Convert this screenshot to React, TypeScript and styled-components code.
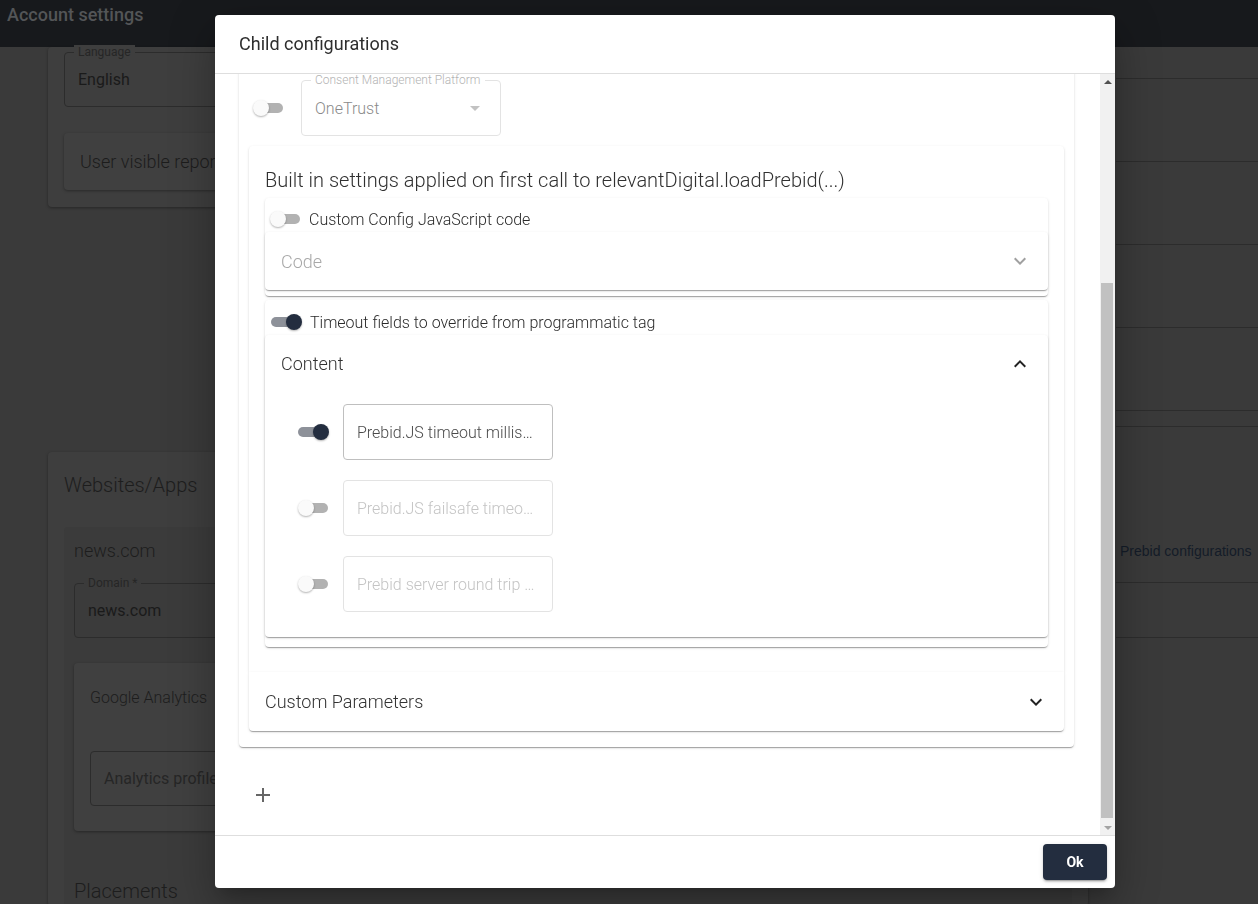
import { useLayoutEffect, useRef, useState } from 'react'
import styled, { createGlobalStyle } from 'styled-components'

const GlobalStyle = createGlobalStyle`
  html, body {
    margin: 0;
    padding: 0;
    font-family: Roboto, "Noto Sans", Arial, sans-serif;
  }
  * { box-sizing: border-box; }
`

const EXPAND_MORE = 'M16.59 8.59 12 13.17 7.41 8.59 6 10l6 6 6-6z'
const EXPAND_LESS = 'm12 8-6 6 1.41 1.41L12 10.83l4.59 4.58L18 14z'
const ARROW_DROP = 'M7 10l5 5 5-5z'
const ADD = 'M19 13h-6v6h-2v-6H5v-2h6V5h2v6h6v2z'

const IconSvg = styled.svg<{ $color: string }>`
  width: 24px;
  height: 24px;
  flex: none;
  fill: ${p => p.$color};
`

const Icon = ({ d, color }: { d: string; color: string }) => (
  <IconSvg $color={color} viewBox="0 0 24 24">
    <path d={d} />
  </IconSvg>
)

/* ---------- background page (dimmed by the dialog) ---------- */

const Page = styled.div`
  min-height: 904px;
  background: #3a3a3a;
  overflow: hidden;
`

const AppBar = styled.div`
  height: 47px;
  background: #17191c;
  padding: 0 7px;
  font-size: 18px;
  font-weight: 500;
  line-height: 30px;
  color: #535557;
`

const Main = styled.div`
  display: grid;
  grid-template-columns: 1040px 1fr;
  column-gap: 28px;
  padding-left: 48px;
`

const LeftCol = styled.div`
  display: flex;
  flex-direction: column;
`

const DimCard = styled.div<{ $bg: string }>`
  background: ${p => p.$bg};
  border-radius: 4px;
  box-shadow: 0 1px 3px rgba(0, 0, 0, 0.35);
`

const AccountCard = styled(DimCard)`
  padding: 5px 16px 17px;
`

const ReportCard = styled(DimCard)`
  margin-top: 26px;
  height: 57px;
  padding-left: 16px;
  display: flex;
  align-items: center;
  font-size: 18px;
  font-weight: 300;
  color: #1c1c1c;
`

const WebsitesCard = styled(DimCard)`
  margin-top: 245px;
  padding: 16px 16px 0;
`

const DimTitle = styled.div<{ $lh: number; $size?: number; $top?: number }>`
  margin-top: ${p => p.$top ?? 0}px;
  font-size: ${p => p.$size ?? 20}px;
  font-weight: 300;
  line-height: ${p => p.$lh}px;
  color: #1d1d1d;
`

const SiteCard = styled(DimCard)`
  margin-top: 25px;
  padding: 10px 10px 0;
  box-shadow: none;
`

const GaCard = styled(DimCard)`
  margin-top: 25px;
  padding: 16px 16px 25px;
`

const DimField = styled.div<{ $top: number; $bg: string }>`
  position: relative;
  margin-top: ${p => p.$top}px;
  height: 55px;
  border: 1px solid #2c2c2c;
  border-radius: 4px;
  background: ${p => p.$bg};
  padding: 0 13px;
  display: flex;
  align-items: center;
  font-size: 16px;
  color: #1a1a1a;
`

const DimLabel = styled.span<{ $bg: string }>`
  position: absolute;
  top: -8px;
  left: 9px;
  padding: 0 4px;
  font-size: 12px;
  line-height: 14px;
  background: ${p => p.$bg};
  color: #262626;
`

const Placeholder = styled.span`
  color: #262626;
  font-size: 16px;
`

const RightCol = styled.div`
  display: flex;
  flex-direction: column;
`

const RightRow = styled.div<{ $h: number }>`
  height: ${p => p.$h}px;
  border-bottom: 1px solid #2c2c2c;
`

const RightLinkRow = styled(RightRow)`
  display: flex;
  align-items: flex-end;
  padding: 0 0 21px 4px;
  font-family: "Liberation Sans", Arial, sans-serif;
  font-size: 14px;
  line-height: 20px;
  color: #141c28;
  white-space: nowrap;
`

/* ---------- dialog ---------- */

const Overlay = styled.div`
  position: fixed;
  inset: 0;
  display: flex;
  align-items: flex-start;
  padding: 15px 0 0 215px;
`

const Dialog = styled.div`
  width: 900px;
  height: 873px;
  background: #fff;
  border-radius: 4px;
  display: flex;
  flex-direction: column;
  box-shadow: 0 11px 15px -7px rgba(0, 0, 0, 0.2), 0 24px 38px 3px rgba(0, 0, 0, 0.14),
    0 9px 46px 8px rgba(0, 0, 0, 0.12);
`

const DialogHeader = styled.div`
  height: 59px;
  flex: none;
  padding: 0 24px 2px;
  display: flex;
  align-items: center;
  border-bottom: 1px solid #dedede;
  font-size: 18px;
  color: #2e2e2e;
`

const BodyRow = styled.div`
  flex: 1;
  min-height: 0;
  display: flex;
`

const DialogBody = styled.div`
  flex: 1;
  overflow-y: auto;
  padding: 16px 26px 20px 24px;
  scrollbar-width: none;
  &::-webkit-scrollbar {
    display: none;
  }
`

const Rail = styled.div`
  width: 15px;
  flex: none;
  background: #f1f1f1;
  display: flex;
  flex-direction: column;
`

const RailButton = styled.div<{ $dir: 'up' | 'down'; $color: string }>`
  height: 15px;
  flex: none;
  display: flex;
  align-items: center;
  justify-content: center;

  &::before {
    content: '';
    border-left: 4px solid transparent;
    border-right: 4px solid transparent;
    ${p => (p.$dir === 'up' ? 'border-bottom' : 'border-top')}: 4px solid ${p => p.$color};
  }
`

const RailTrack = styled.div`
  flex: 1;
  display: flex;
  flex-direction: column;
  padding: 0 2px 2px 1px;
`

const RailThumb = styled.div`
  background: #c1c1c1;
  flex: none;
`

const DialogFooter = styled.div`
  height: 53px;
  flex: none;
  border-top: 1px solid #dedede;
  padding: 8px;
  display: flex;
  justify-content: flex-end;
  align-items: flex-start;
`

const OkButton = styled.button`
  width: 64px;
  height: 36px;
  border: none;
  border-radius: 4px;
  background: #232d3f;
  color: #fff;
  font-family: Roboto, sans-serif;
  font-size: 14px;
  font-weight: 700;
  box-shadow: 0 3px 1px -2px rgba(0, 0, 0, 0.2), 0 2px 2px 0 rgba(0, 0, 0, 0.14),
    0 1px 5px 0 rgba(0, 0, 0, 0.12);
`

const Paper = styled.div`
  background: #fff;
  border-radius: 4px;
  box-shadow: 0 2px 1px -1px rgba(0, 0, 0, 0.2), 0 1px 1px 0 rgba(0, 0, 0, 0.14),
    0 1px 3px 0 rgba(0, 0, 0, 0.12);
`

const ConfigCard = styled(Paper)`
  padding: 16px 10px 16px;
  display: flex;
  flex-direction: column;
`

const HiddenTop = styled.div`
  height: 250px;
  display: flex;
  flex-direction: column;
  gap: 20px;
  padding-left: 4px;
`

const HiddenHeading = styled.div`
  font-size: 16px;
  line-height: 22px;
  color: #333;
`

const CmpRow = styled.div`
  height: 56px;
  padding-left: 4px;
  display: flex;
  align-items: center;
  gap: 17px;
`

const Outlined = styled.div<{ $w: number; $state: 'normal' | 'off' }>`
  position: relative;
  width: ${p => p.$w}px;
  height: 56px;
  flex: none;
  border: 1px solid ${p => (p.$state === 'normal' ? '#bfbfbf' : '#e3e3e3')};
  border-radius: 4px;
  padding: 0 13px;
  display: flex;
  align-items: center;
  justify-content: space-between;
  font-size: 16px;
  font-weight: 300;
  color: ${p => (p.$state === 'normal' ? '#4a4a4a' : '#c4c4c4')};
  background: #fff;
`

const OutlinedText = styled.span`
  white-space: nowrap;
  overflow: hidden;
  text-overflow: ellipsis;
`

const FloatLabel = styled.span<{ $off?: boolean }>`
  position: absolute;
  top: -8px;
  left: 9px;
  padding: 0 4px;
  font-size: 12px;
  line-height: 14px;
  background: #fff;
  color: ${p => (p.$off ? '#b3b3b3' : '#777')};
  white-space: nowrap;
`

const SelectValue = styled.span`
  color: #8a8a8a;
`

const Switch = styled.span<{ $on?: boolean }>`
  position: relative;
  display: inline-block;
  flex: none;
  width: 31px;
  height: 16px;

  &::before {
    content: '';
    position: absolute;
    top: 3px;
    left: ${p => (p.$on ? 0 : 5)}px;
    width: 25px;
    height: 10px;
    border-radius: 5px;
    background: ${p => (p.$on ? '#8d9199' : '#b2b2b2')};
  }

  &::after {
    content: '';
    position: absolute;
    top: 0;
    left: ${p => (p.$on ? 15 : 0)}px;
    width: 16px;
    height: 16px;
    border-radius: 50%;
    background: ${p => (p.$on ? '#232d3f' : '#fafafa')};
    box-shadow: 0 1px 2px rgba(0, 0, 0, 0.3);
  }
`

const SettingsCard = styled(Paper)`
  margin-top: 10px;
  padding: 16px 16px 25px;
  display: flex;
  flex-direction: column;
  gap: 4px;
  border-radius: 4px 4px 0 0;
`

const SettingsTitle = styled.div`
  font-size: 20px;
  font-weight: 300;
  line-height: 36px;
  margin-bottom: -4px;
  color: #303030;
`

const SubCard = styled(Paper)<{ $pb: number }>`
  padding-bottom: ${p => p.$pb}px;
`

const ToggleRow = styled.div<{ $h: number; $pt: number; $pl: number }>`
  height: ${p => p.$h}px;
  padding: ${p => p.$pt}px 0 0 ${p => p.$pl}px;
  display: flex;
  align-items: center;
  gap: 8px;
  font-size: 16px;
  font-weight: 300;
  color: #2a2a2a;
`

const Accordion = styled(Paper)``

const AccordionHead = styled.div<{ $h: number; $muted?: boolean }>`
  height: ${p => p.$h}px;
  padding: 0 16px;
  display: flex;
  align-items: center;
  justify-content: space-between;
  font-size: 18px;
  font-weight: 300;
  color: ${p => (p.$muted ? '#a8a8a8' : '#333')};
`

const AccordionDetails = styled.div`
  padding: 12px 0 25px 33px;
  display: flex;
  flex-direction: column;
  gap: 20px;
`

const FieldRow = styled.div`
  display: flex;
  align-items: center;
  gap: 14px;
`

const ParamsCard = styled(Paper)`
  border-radius: 0 0 4px 4px;
`

const AddButton = styled.button`
  margin: 28px 0 0 4px;
  width: 40px;
  height: 40px;
  border: none;
  border-radius: 50%;
  background: transparent;
  display: flex;
  align-items: center;
  justify-content: center;
  padding: 0;
`

const timeoutFields = [
  { on: true, label: 'Prebid.JS timeout milliseconds' },
  { on: false, label: 'Prebid.JS failsafe timeout milliseconds' },
  { on: false, label: 'Prebid server round trip timeout' },
]

function Background() {
  return (
    <Page>
      <AppBar>Account settings</AppBar>
      <Main>
        <LeftCol>
          <AccountCard $bg="#3e3e3e">
            <DimField $top={0} $bg="#3e3e3e">
              <DimLabel $bg="#3e3e3e">Language</DimLabel>
              English
            </DimField>
            <ReportCard $bg="#404040">User visible reports</ReportCard>
          </AccountCard>
          <WebsitesCard $bg="#3e3e3e">
            <DimTitle $lh={34}>Websites/Apps</DimTitle>
            <SiteCard $bg="#3b3b3b">
              <DimTitle $lh={28} $size={18}>news.com</DimTitle>
              <DimField $top={18} $bg="#3b3b3b">
                <DimLabel $bg="#3b3b3b">Domain *</DimLabel>
                news.com
              </DimField>
              <GaCard $bg="#404040">
                <DimTitle $lh={38} $size={16}>Google Analytics</DimTitle>
                <DimField $top={34} $bg="#404040">
                  <Placeholder>Analytics profile</Placeholder>
                </DimField>
              </GaCard>
              <DimTitle $lh={30} $top={45}>Placements</DimTitle>
            </SiteCard>
          </WebsitesCard>
        </LeftCol>
        <RightCol>
          <RightRow $h={32} />
          <RightRow $h={83} />
          <RightRow $h={83} />
          <RightRow $h={83} />
          <RightRow $h={83} />
          <RightRow $h={16} />
          <RightLinkRow $h={156}>Prebid configurations</RightLinkRow>
          <RightRow $h={55} />
        </RightCol>
      </Main>
    </Page>
  )
}

function App() {
  const bodyRef = useRef<HTMLDivElement>(null)
  const trackRef = useRef<HTMLDivElement>(null)
  const [thumb, setThumb] = useState({ top: 0, height: 0 })

  const measure = () => {
    const el = bodyRef.current
    const track = trackRef.current
    if (!el || !track) return
    const len = track.clientHeight - 2
    const height = (len * el.clientHeight) / el.scrollHeight
    const range = el.scrollHeight - el.clientHeight
    const top = range > 0 ? (el.scrollTop / range) * (len - height) : 0
    setThumb({ top, height })
  }

  useLayoutEffect(() => {
    const el = bodyRef.current
    if (el) el.scrollTop = el.scrollHeight
    measure()
  }, [])

  return (
    <>
      <GlobalStyle />
      <Background />
      <Overlay>
        <Dialog>
          <DialogHeader>Child configurations</DialogHeader>
          <BodyRow>
            <DialogBody ref={bodyRef} onScroll={measure}>
              <ConfigCard>
                <HiddenTop>
                  <HiddenHeading>Child configuration</HiddenHeading>
                  <Outlined $w={400} $state="normal">
                    <FloatLabel>Name</FloatLabel>
                    <OutlinedText>Child 1</OutlinedText>
                  </Outlined>
                  <Outlined $w={400} $state="normal">
                    <FloatLabel>Description</FloatLabel>
                    <OutlinedText />
                  </Outlined>
                  <HiddenHeading>Prebid settings</HiddenHeading>
                </HiddenTop>
                <CmpRow>
                  <Switch />
                  <Outlined $w={200} $state="off">
                    <FloatLabel $off>Consent Management Platform</FloatLabel>
                    <SelectValue>OneTrust</SelectValue>
                    <Icon d={ARROW_DROP} color="#c2c2c2" />
                  </Outlined>
                </CmpRow>
                <SettingsCard>
                  <SettingsTitle>
                    Built in settings applied on first call to relevantDigital.loadPrebid(...)
                  </SettingsTitle>
                  <SubCard $pb={6}>
                    <ToggleRow $h={34} $pt={8} $pl={5}>
                      <Switch />
                      Custom Config JavaScript code
                    </ToggleRow>
                    <Accordion>
                      <AccordionHead $h={58} $muted>
                        Code
                        <Icon d={EXPAND_MORE} color="#a0a0a0" />
                      </AccordionHead>
                    </Accordion>
                  </SubCard>
                  <SubCard $pb={10}>
                    <ToggleRow $h={35} $pt={9} $pl={6}>
                      <Switch $on />
                      Timeout fields to override from programmatic tag
                    </ToggleRow>
                    <Accordion>
                      <AccordionHead $h={57}>
                        Content
                        <Icon d={EXPAND_LESS} color="#222" />
                      </AccordionHead>
                      <AccordionDetails>
                        {timeoutFields.map(f => (
                          <FieldRow key={f.label}>
                            <Switch $on={f.on} />
                            <Outlined $w={210} $state={f.on ? 'normal' : 'off'}>
                              <OutlinedText>{f.label}</OutlinedText>
                            </Outlined>
                          </FieldRow>
                        ))}
                      </AccordionDetails>
                    </Accordion>
                  </SubCard>
                </SettingsCard>
                <ParamsCard>
                  <AccordionHead $h={59}>
                    Custom Parameters
                    <Icon d={EXPAND_MORE} color="#222" />
                  </AccordionHead>
                </ParamsCard>
              </ConfigCard>
              <AddButton>
                <Icon d={ADD} color="#666" />
              </AddButton>
            </DialogBody>
            <Rail>
              <RailButton $dir="up" $color="#505050" />
              <RailTrack ref={trackRef}>
                <RailThumb style={{ marginTop: thumb.top, height: thumb.height }} />
              </RailTrack>
              <RailButton $dir="down" $color="#a3a3a3" />
            </Rail>
          </BodyRow>
          <DialogFooter>
            <OkButton>Ok</OkButton>
          </DialogFooter>
        </Dialog>
      </Overlay>
    </>
  )
}

export default App
